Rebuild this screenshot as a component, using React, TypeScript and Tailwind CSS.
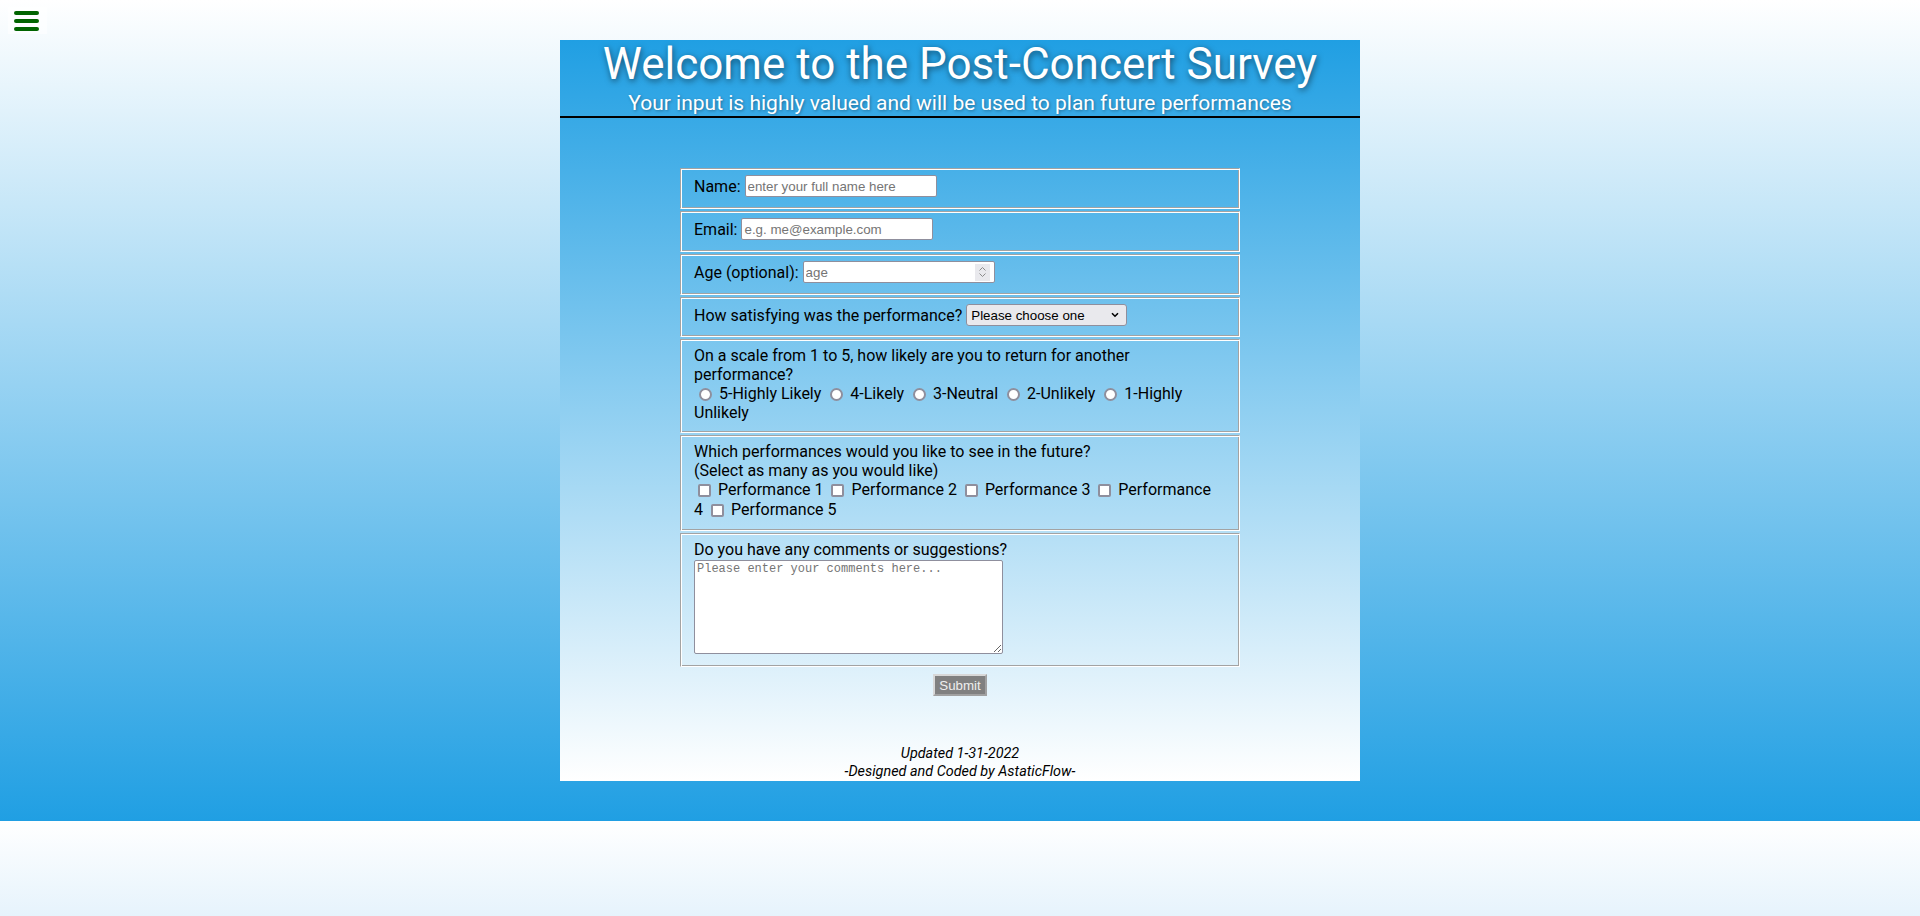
import React from 'react';

const box =
  'border border-t-[#a3a3a3] border-l-[#a3a3a3] border-b-white border-r-white shadow-[inset_1px_1px_0_#ffffff,inset_-1px_-1px_0_#a3a3a3] px-[13px]';

const control =
  "bg-white border border-[#8f8f9d] rounded-[2px] px-[2px] h-[22px] text-[13.33px] font-['Liberation_Sans',Arial,sans-serif] text-black placeholder:text-[#757575]";

const radio =
  'appearance-none inline-block align-[-2px] w-[13px] h-[13px] rounded-full border-2 border-[#8f8f9d] bg-white ml-[5px] mr-[3px]';

const check =
  'appearance-none inline-block align-[-2px] w-[13px] h-[13px] rounded-[2px] border-2 border-[#8f8f9d] bg-white ml-[4px] mr-[3px]';

const App: React.FC = () => {
  return (
    <div className="min-h-screen flex flex-col font-['Roboto',sans-serif] text-black">
      <div className="bg-[linear-gradient(to_bottom,#ffffff,#209fe3)] py-10">
        <main className="w-[800px] mx-auto bg-[linear-gradient(to_bottom,#209fe3,#ffffff)]">
          <header className="text-center text-white border-b-2 border-black pb-px">
            <h1 className="text-[44px] leading-[48px] font-normal [text-shadow:1px_2px_6px_rgba(0,0,0,0.55)]">
              Welcome to the Post-Concert Survey
            </h1>
            <p className="mt-[3px] text-[21px] leading-[24px] [text-shadow:1px_1px_3px_rgba(0,0,0,0.35)]">
              Your input is highly valued and will be used to plan future performances
            </p>
          </header>

          <form className="w-[560px] mx-auto mt-[50px] flex flex-col gap-[2px] text-[16px] leading-[normal]">
            <div className={`${box} pt-[6px] pb-[11px]`}>
              <div className="flex items-center h-[22px] gap-[4px]">
                <label htmlFor="name">Name:</label>
                <input id="name" type="text" placeholder="enter your full name here" className={`${control} w-[192px]`} />
              </div>
            </div>

            <div className={`${box} pt-[6px] pb-[11px]`}>
              <div className="flex items-center h-[22px] gap-[4px]">
                <label htmlFor="email">Email:</label>
                <input id="email" type="email" placeholder="e.g. me@example.com" className={`${control} w-[192px]`} />
              </div>
            </div>

            <div className={`${box} pt-[6px] pb-[11px]`}>
              <div className="flex items-center h-[22px] gap-[4px]">
                <label htmlFor="age">Age (optional):</label>
                <div className={`${control} w-[192px] flex items-center justify-between pr-[4px]`}>
                  <input id="age" type="text" placeholder="age" className="w-[150px] outline-none placeholder:text-[#757575]" />
                  <span className="w-[15px] h-[17px] bg-[#e9e9ed] flex flex-col items-center justify-center gap-[2px]">
                    <svg width="7" height="4" viewBox="0 0 7 4">
                      <path d="M0.5 3.5L3.5 0.5L6.5 3.5" fill="none" stroke="#8a8a8a" strokeWidth="1" />
                    </svg>
                    <svg width="7" height="4" viewBox="0 0 7 4">
                      <path d="M0.5 0.5L3.5 3.5L6.5 0.5" fill="none" stroke="#8a8a8a" strokeWidth="1" />
                    </svg>
                  </span>
                </div>
              </div>
            </div>

            <div className={`${box} pt-[6px] pb-[10px]`}>
              <div className="flex items-center h-[22px] gap-[4px]">
                <label htmlFor="satisfaction">How satisfying was the performance?</label>
                <div className="relative">
                  <select
                    id="satisfaction"
                    defaultValue=""
                    className="appearance-none w-[161px] h-[22px] pl-[4px] bg-[#e9e9ed] border border-[#8f8f9d] rounded-[3px] text-[13.33px] font-['Liberation_Sans',Arial,sans-serif] text-black"
                  >
                    <option value="" disabled>Please choose one</option>
                    <option>Very satisfying</option>
                    <option>Satisfying</option>
                    <option>Not satisfying</option>
                  </select>
                  <svg className="absolute right-[8px] top-[8px] pointer-events-none" width="8" height="6" viewBox="0 0 8 6">
                    <path d="M1 1.2L4 4.2L7 1.2" fill="none" stroke="#000" strokeWidth="1.6" />
                  </svg>
                </div>
              </div>
            </div>

            <div className={`${box} pt-[6px] pb-[10px]`}>
              <p>On a scale from 1 to 5, how likely are you to return for another<br />performance?</p>
              <p>
                <input type="radio" name="likely" className={radio} /> 5-Highly Likely{' '}
                <input type="radio" name="likely" className={radio} /> 4-Likely{' '}
                <input type="radio" name="likely" className={radio} /> 3-Neutral{' '}
                <input type="radio" name="likely" className={radio} /> 2-Unlikely{' '}
                <input type="radio" name="likely" className={radio} /> 1-Highly<br />Unlikely
              </p>
            </div>

            <div className={`${box} pt-[6px] pb-[11px]`}>
              <p>Which performances would you like to see in the future?<br />(Select as many as you would like)</p>
              <p className="leading-[19.5px]">
                <input type="checkbox" className={check} /> Performance 1{' '}
                <input type="checkbox" className={check} /> Performance 2{' '}
                <input type="checkbox" className={check} /> Performance 3{' '}
                <input type="checkbox" className={check} /> Performance<br />4{' '}
                <input type="checkbox" className={check} /> Performance 5
              </p>
            </div>

            <div className={`${box} pt-[6px] pb-[12px]`}>
              <label htmlFor="comments" className="block">Do you have any comments or suggestions?</label>
              <textarea
                id="comments"
                placeholder="Please enter your comments here..."
                className="block mt-px w-[309px] h-[94px] bg-white border border-[#8f8f9d] rounded-[2px] px-[2px] py-px text-[12px] leading-[15px] font-['Liberation_Mono',monospace] placeholder:text-[#757575]"
              />
            </div>
          </form>

          <div className="flex justify-center mt-[7px]">
            <button
              type="submit"
              className="w-[54px] h-[22px] bg-[#808080] text-[#eeeeee] text-[13.33px] font-['Liberation_Sans',Arial,sans-serif] border-2 border-t-[#d8d8d8] border-l-[#d8d8d8] border-b-[#a0a0a0] border-r-[#a0a0a0]"
            >
              Submit
            </button>
          </div>

          <footer className="mt-[49px] text-center italic text-[14.4px] leading-[18px]">
            <p>Updated 1-31-2022</p>
            <p>-Designed and Coded by AstaticFlow-</p>
          </footer>
        </main>
      </div>
      <div className="flex-1 bg-[linear-gradient(to_bottom,#ffffff,#e6f3fc)]" />

      <button className="fixed top-[7px] left-[8px] w-[39px] h-[27px] bg-white/50 flex flex-col items-center justify-center gap-[4px] pr-[3px]" aria-label="menu">
        <span className="block w-[25px] h-[4px] rounded-full bg-[#006400]" />
        <span className="block w-[25px] h-[4px] rounded-full bg-[#006400]" />
        <span className="block w-[25px] h-[4px] rounded-full bg-[#006400]" />
      </button>
    </div>
  );
};

export default App;
